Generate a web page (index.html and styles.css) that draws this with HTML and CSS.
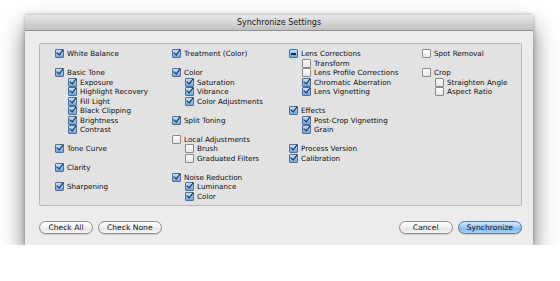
FILE: index.html
```html
<!DOCTYPE html>
<html lang="en">
<head>
    <meta charset="UTF-8">
    <title>Synchronize Settings</title>
    <link rel="stylesheet" href="styles.css">
</head>
<body>

<div class="window">
    <div class="titlebar">Synchronize Settings</div>

    <div class="content">
        <div class="group-box">
            <!-- column 1 -->
            <div class="column">
                <div class="group">
                    <div class="item"><span class="box on"></span>White Balance</div>
                </div>
                <div class="group">
                    <div class="item"><span class="box on"></span>Basic Tone</div>
                    <div class="item sub"><span class="box on"></span>Exposure</div>
                    <div class="item sub"><span class="box on"></span>Highlight Recovery</div>
                    <div class="item sub"><span class="box on"></span>Fill Light</div>
                    <div class="item sub"><span class="box on"></span>Black Clipping</div>
                    <div class="item sub"><span class="box on"></span>Brightness</div>
                    <div class="item sub"><span class="box on"></span>Contrast</div>
                </div>
                <div class="group">
                    <div class="item"><span class="box on"></span>Tone Curve</div>
                </div>
                <div class="group">
                    <div class="item"><span class="box on"></span>Clarity</div>
                </div>
                <div class="group">
                    <div class="item"><span class="box on"></span>Sharpening</div>
                </div>
            </div>

            <!-- column 2 -->
            <div class="column">
                <div class="group">
                    <div class="item"><span class="box on"></span>Treatment (Color)</div>
                </div>
                <div class="group">
                    <div class="item"><span class="box on"></span>Color</div>
                    <div class="item sub"><span class="box on"></span>Saturation</div>
                    <div class="item sub"><span class="box on"></span>Vibrance</div>
                    <div class="item sub"><span class="box on"></span>Color Adjustments</div>
                </div>
                <div class="group">
                    <div class="item"><span class="box on"></span>Split Toning</div>
                </div>
                <div class="group">
                    <div class="item"><span class="box"></span>Local Adjustments</div>
                    <div class="item sub"><span class="box"></span>Brush</div>
                    <div class="item sub"><span class="box"></span>Graduated Filters</div>
                </div>
                <div class="group">
                    <div class="item"><span class="box on"></span>Noise Reduction</div>
                    <div class="item sub"><span class="box on"></span>Luminance</div>
                    <div class="item sub"><span class="box on"></span>Color</div>
                </div>
            </div>

            <!-- column 3 -->
            <div class="column">
                <div class="group">
                    <div class="item"><span class="box mixed"></span>Lens Corrections</div>
                    <div class="item sub"><span class="box"></span>Transform</div>
                    <div class="item sub"><span class="box"></span>Lens Profile Corrections</div>
                    <div class="item sub"><span class="box on"></span>Chromatic Aberration</div>
                    <div class="item sub"><span class="box on"></span>Lens Vignetting</div>
                </div>
                <div class="group">
                    <div class="item"><span class="box on"></span>Effects</div>
                    <div class="item sub"><span class="box on"></span>Post-Crop Vignetting</div>
                    <div class="item sub"><span class="box on"></span>Grain</div>
                </div>
                <div class="group">
                    <div class="item"><span class="box on"></span>Process Version</div>
                    <div class="item"><span class="box on"></span>Calibration</div>
                </div>
            </div>

            <!-- column 4 -->
            <div class="column">
                <div class="group">
                    <div class="item"><span class="box"></span>Spot Removal</div>
                </div>
                <div class="group">
                    <div class="item"><span class="box"></span>Crop</div>
                    <div class="item sub"><span class="box"></span>Straighten Angle</div>
                    <div class="item sub"><span class="box"></span>Aspect Ratio</div>
                </div>
            </div>
        </div>

        <div class="buttons">
            <button class="btn">Check All</button>
            <button class="btn">Check None</button>
            <span class="spacer"></span>
            <button class="btn">Cancel</button>
            <button class="btn default">Synchronize</button>
        </div>
    </div>
</div>

</body>
</html>
```

FILE: styles.css
```css
/* Mac style dialog */
body {
    margin: 0;
    background-color: #fff;
    font-family: 'DejaVu Sans', sans-serif;
    color: #111;
}

.window {
    width: 508px;
    height: 230px;
    margin: 15px 0 0 25px;
    background-color: #ececec;
    box-shadow: 0 12px 22px rgba(0, 0, 0, 0.55), 0 0 4px rgba(0, 0, 0, 0.3);
    display: flex;
    flex-direction: column;
}

.titlebar {
    height: 15px;
    line-height: 15px;
    text-align: center;
    font-size: 8px;
    color: #1a1a1a;
    background: linear-gradient(#e8e8e8, #c2c2c2);
    border-bottom: 1px solid #8f8f8f;
    border-radius: 3px 3px 0 0;
}

.content {
    flex: 1;
    padding: 12px 11px 0 14px;
    display: flex;
    flex-direction: column;
}

.group-box {
    box-sizing: border-box;
    height: 163px;
    background-color: #e2e2e2;
    border: 1px solid #b8b8b8;
    border-radius: 2px;
    padding: 5px 0 0 15px;
    display: grid;
    grid-template-columns: 117px 117px 133px 1fr;
}

.group {
    margin-bottom: 9.53px;
}

.item {
    height: 9.53px;
    line-height: 9.53px;
    font-size: 7.2px;
    display: flex;
    align-items: center;
    white-space: nowrap;
    color: #0c0c0c;
}

.item.sub {
    padding-left: 13px;
}

/* checkboxes */
.box {
    width: 7px;
    height: 7px;
    margin-right: 3px;
    border: 1px solid #8a8a8a;
    border-radius: 1px;
    background: linear-gradient(#ffffff, #e6e6e6);
    position: relative;
    flex-shrink: 0;
}

.box.on,
.box.mixed {
    border-color: #4a6e9e;
    background: linear-gradient(#c8e0f8, #6aa6e0);
}

.box.on::after {
    content: "";
    position: absolute;
    left: 2px;
    top: -2px;
    width: 3px;
    height: 6px;
    border-right: 1.6px solid #1c2a3c;
    border-bottom: 1.6px solid #1c2a3c;
    transform: rotate(38deg);
}

.box.mixed::after {
    content: "";
    position: absolute;
    left: 1px;
    top: 3px;
    width: 5px;
    height: 1.5px;
    background-color: #1c2a3c;
}

/* bottom buttons */
.buttons {
    display: flex;
    align-items: center;
    gap: 5px;
    margin-top: 15px;
}

.spacer {
    flex: 1;
}

.btn {
    height: 13px;
    min-width: 54px;
    padding: 0 8px;
    font-family: 'DejaVu Sans', sans-serif;
    font-size: 7.6px;
    line-height: 11px;
    color: #111;
    border: 1px solid #8c8c8c;
    border-radius: 7px;
    background: linear-gradient(#ffffff, #f0f0f0 50%, #e2e2e2 51%, #f6f6f6);
    box-shadow: 0 1px 1px rgba(0, 0, 0, 0.12);
}

.btn.default {
    border-color: #5577a8;
    background: linear-gradient(#d4e8fb, #9cc8f2 50%, #78b2ec 51%, #a8d4fa);
}
```
